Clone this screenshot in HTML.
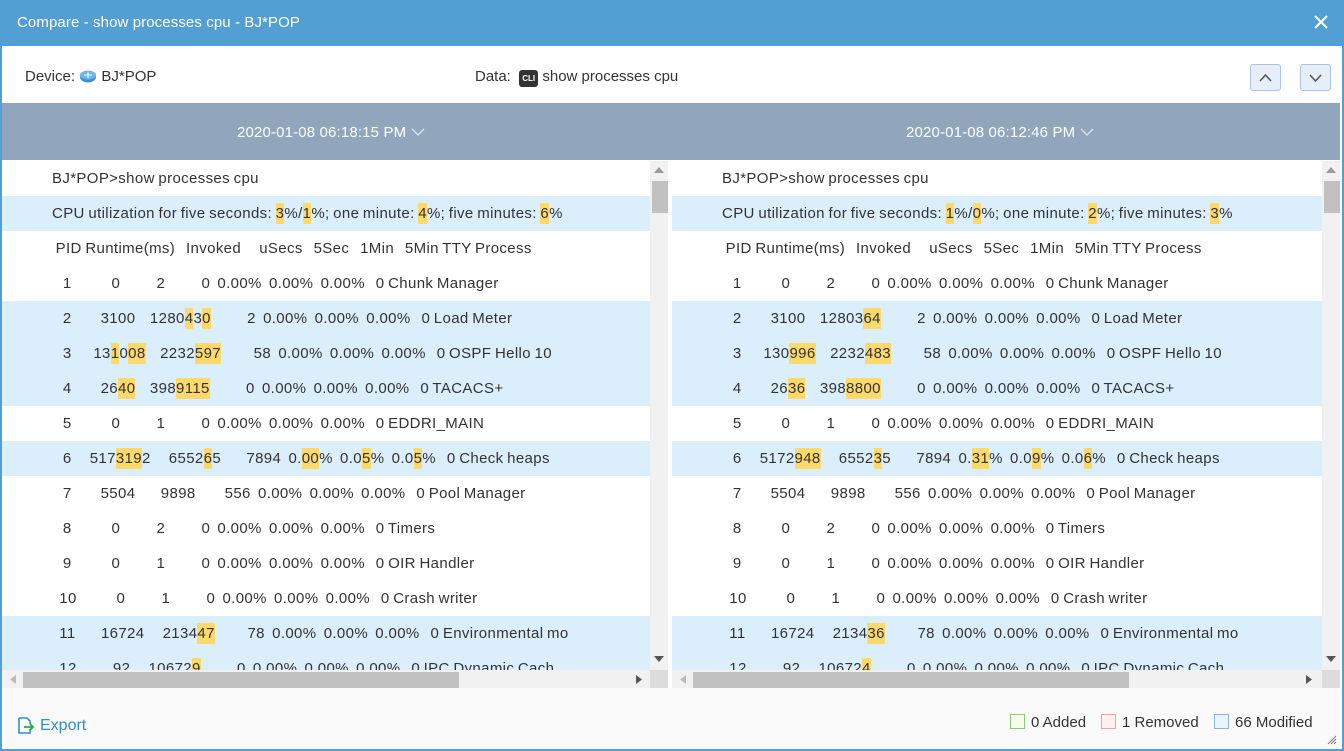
<!DOCTYPE html>
<html><head><meta charset="utf-8">
<style>
*{margin:0;padding:0;box-sizing:border-box}
body{width:1344px;height:751px;overflow:hidden;font-family:"Liberation Sans",sans-serif;color:#333;background:#fff;position:relative}
.win{position:absolute;left:0;top:0;width:1344px;height:751px;border:2px solid #519fd3;border-top:none;background:#fff}
.title{position:absolute;left:0;top:0;width:1344px;height:46px;background:#519fd3;color:#fff;font-size:15px;line-height:46px;padding-left:17px;letter-spacing:0.1px}
.close{position:absolute;right:14px;top:13px;width:18px;height:18px}
.info{position:absolute;top:67px;font-size:15px;line-height:20px}
.btn{position:absolute;top:64px;width:31px;height:27px;border:1px solid #a9c4e4;border-radius:3px;background:#e6eefa}
.gbar{position:absolute;left:2px;top:103px;width:1338px;height:57px;background:#91a6bd;color:#fff;font-size:15px;line-height:57px;letter-spacing:0.15px}
.gbar span{position:absolute;top:1px}
.pane{position:absolute;top:161px;height:509px;overflow:hidden;background:#fff}
.row{height:35px;line-height:36px;font-size:15px;white-space:pre;padding-left:50px;letter-spacing:0.36px;word-spacing:-0.9px}
.b{background:#dbeefc}
.h{background:#fdd86a;display:inline-block;line-height:21px;height:21px}
.vs{position:absolute;top:161px;width:18px;height:509px;background:#f1f1f1}
.vs .t{position:absolute;left:2px;top:20px;width:16px;height:32px;background:#c1c1c1}
.hs{position:absolute;top:670px;height:18px;background:#f1f1f1}
.hs .t{position:absolute;top:2px;height:16px;background:#c1c1c1}
.footer{position:absolute;left:2px;top:688px;width:1340px;height:61px;background:#fafafa}
.lg{position:absolute;top:714px;font-size:15px;line-height:16px}
.lg i{display:inline-block;width:15px;height:15px;vertical-align:-2px;margin-right:6px;border:1px solid}
</style></head><body>
<div class="win"></div>
<div class="title">Compare - show processes cpu - BJ*POP
<svg class="close" viewBox="0 0 18 18"><path d="M3 3L15 15M15 3L3 15" stroke="#fff" stroke-width="2"/></svg></div>

<div class="info" style="left:25px">Device: <svg width="18" height="14" viewBox="0 0 18 14" style="vertical-align:-2px"><ellipse cx="9" cy="8" rx="8" ry="5.5" fill="#3b8fd6"/><ellipse cx="9" cy="6" rx="8" ry="4.5" fill="#6bb6ef"/><path d="M5 6h8M9 3v6" stroke="#fff" stroke-width="1"/></svg> BJ*POP</div>
<div class="info" style="left:475px">Data: &nbsp;<span style="display:inline-block;width:19px;height:17px;background:#333;border-radius:3px;color:#fff;font-size:8px;line-height:17px;text-align:center;font-weight:bold;vertical-align:0">CLI</span> show processes cpu</div>
<div class="btn" style="left:1250px"><svg width="29" height="25" viewBox="0 0 29 25"><path d="M9 16l5.5-6 5.5 6" fill="none" stroke="#555" stroke-width="1.6"/></svg></div>
<div class="btn" style="left:1300px"><svg width="29" height="25" viewBox="0 0 29 25"><path d="M9 10l5.5 6 5.5-6" fill="none" stroke="#555" stroke-width="1.6"/></svg></div>

<div class="gbar"><span style="left:235px">2020-01-08 06:18:15 PM <svg width="14" height="10" viewBox="0 0 14 10"><path d="M1 2l6 6 6-6" fill="none" stroke="#dde5ee" stroke-width="1.3"/></svg></span>
<span style="left:904px">2020-01-08 06:12:46 PM <svg width="14" height="10" viewBox="0 0 14 10"><path d="M1 2l6 6 6-6" fill="none" stroke="#dde5ee" stroke-width="1.3"/></svg></span></div>

<div class="pane" style="left:2px;width:648px">
<div class="row">BJ*POP&gt;show processes cpu</div>
<div class="row b">CPU utilization for five seconds: <span class="h">3</span>%/<span class="h">1</span>%; one minute: <span class="h">4</span>%; five minutes: <span class="h">6</span>%</div>
<div class="row"> PID Runtime(ms)   Invoked     uSecs   5Sec   1Min   5Min TTY Process</div>
<div class="row">   1           0          2          0  0.00%  0.00%  0.00%   0 Chunk Manager</div>
<div class="row b">   2        3100    1280<span class="h">4</span>3<span class="h">0</span>          2  0.00%  0.00%  0.00%   0 Load Meter</div>
<div class="row b">   3      13<span class="h">1</span>0<span class="h">08</span>    2232<span class="h">597</span>         58  0.00%  0.00%  0.00%   0 OSPF Hello 10</div>
<div class="row b">   4        26<span class="h">40</span>    398<span class="h">9115</span>          0  0.00%  0.00%  0.00%   0 TACACS+</div>
<div class="row">   5           0          1          0  0.00%  0.00%  0.00%   0 EDDRI_MAIN</div>
<div class="row b">   6     517<span class="h">319</span>2     6552<span class="h">6</span>5       7894  0.<span class="h">00</span>%  0.0<span class="h">5</span>%  0.0<span class="h">5</span>%   0 Check heaps</div>
<div class="row">   7        5504       9898        556  0.00%  0.00%  0.00%   0 Pool Manager</div>
<div class="row">   8           0          2          0  0.00%  0.00%  0.00%   0 Timers</div>
<div class="row">   9           0          1          0  0.00%  0.00%  0.00%   0 OIR Handler</div>
<div class="row">  10           0          1          0  0.00%  0.00%  0.00%   0 Crash writer</div>
<div class="row b">  11       16724     2134<span class="h">47</span>         78  0.00%  0.00%  0.00%   0 Environmental mo</div>
<div class="row b">  12          92     10672<span class="h">9</span>          0  0.00%  0.00%  0.00%   0 IPC Dynamic Cach</div>
</div>

<div class="pane" style="left:672px;width:650px">
<div class="row">BJ*POP&gt;show processes cpu</div>
<div class="row b">CPU utilization for five seconds: <span class="h">1</span>%/<span class="h">0</span>%; one minute: <span class="h">2</span>%; five minutes: <span class="h">3</span>%</div>
<div class="row"> PID Runtime(ms)   Invoked     uSecs   5Sec   1Min   5Min TTY Process</div>
<div class="row">   1           0          2          0  0.00%  0.00%  0.00%   0 Chunk Manager</div>
<div class="row b">   2        3100    12803<span class="h">64</span>          2  0.00%  0.00%  0.00%   0 Load Meter</div>
<div class="row b">   3      130<span class="h">996</span>    2232<span class="h">483</span>         58  0.00%  0.00%  0.00%   0 OSPF Hello 10</div>
<div class="row b">   4        26<span class="h">36</span>    398<span class="h">8800</span>          0  0.00%  0.00%  0.00%   0 TACACS+</div>
<div class="row">   5           0          1          0  0.00%  0.00%  0.00%   0 EDDRI_MAIN</div>
<div class="row b">   6     5172<span class="h">948</span>     6552<span class="h">3</span>5       7894  0.<span class="h">31</span>%  0.0<span class="h">9</span>%  0.0<span class="h">6</span>%   0 Check heaps</div>
<div class="row">   7        5504       9898        556  0.00%  0.00%  0.00%   0 Pool Manager</div>
<div class="row">   8           0          2          0  0.00%  0.00%  0.00%   0 Timers</div>
<div class="row">   9           0          1          0  0.00%  0.00%  0.00%   0 OIR Handler</div>
<div class="row">  10           0          1          0  0.00%  0.00%  0.00%   0 Crash writer</div>
<div class="row b">  11       16724     2134<span class="h">36</span>         78  0.00%  0.00%  0.00%   0 Environmental mo</div>
<div class="row b">  12          92     10672<span class="h">4</span>          0  0.00%  0.00%  0.00%   0 IPC Dynamic Cach</div>
</div>

<div class="vs" style="left:650px"><div class="t"></div>
<svg style="position:absolute;left:4px;top:6px" width="10" height="6"><path d="M0 6L5 0L10 6Z" fill="#999"/></svg>
<svg style="position:absolute;left:4px;top:495px" width="10" height="6"><path d="M0 0L5 6L10 0Z" fill="#555"/></svg></div>
<div class="vs" style="left:1322px"><div class="t"></div>
<svg style="position:absolute;left:4px;top:6px" width="10" height="6"><path d="M0 6L5 0L10 6Z" fill="#999"/></svg>
<svg style="position:absolute;left:4px;top:495px" width="10" height="6"><path d="M0 0L5 6L10 0Z" fill="#555"/></svg></div>
<div style="position:absolute;left:668px;top:161px;width:4px;height:527px;background:#fff"></div>

<div class="hs" style="left:2px;width:648px"><div class="t" style="left:21px;width:436px"></div>
<svg style="position:absolute;left:8px;top:5px" width="6" height="9"><path d="M6 0L0 4.5L6 9Z" fill="#bbb"/></svg>
<svg style="position:absolute;left:634px;top:5px" width="6" height="9"><path d="M0 0L6 4.5L0 9Z" fill="#555"/></svg></div>
<div style="position:absolute;left:650px;top:670px;width:18px;height:18px;background:#dcdcdc"></div>
<div class="hs" style="left:672px;width:650px"><div class="t" style="left:21px;width:436px"></div>
<svg style="position:absolute;left:8px;top:5px" width="6" height="9"><path d="M6 0L0 4.5L6 9Z" fill="#bbb"/></svg>
<svg style="position:absolute;left:634px;top:5px" width="6" height="9"><path d="M0 0L6 4.5L0 9Z" fill="#555"/></svg></div>
<div style="position:absolute;left:1322px;top:670px;width:18px;height:18px;background:#dcdcdc"></div>

<div class="footer"></div>
<svg style="position:absolute;left:17px;top:717px" width="18" height="17" viewBox="0 0 18 17"><path d="M2 1h8l3 3v3M13 12v4H2V1" fill="none" stroke="#2f8fd4" stroke-width="1.6"/><path d="M7 10h9M13 7l3 3-3 3" fill="none" stroke="#2aa84a" stroke-width="1.8"/></svg>
<div style="position:absolute;left:40px;top:717px;font-size:16px;line-height:18px;color:#2f8fd4">Export</div>
<div class="lg" style="left:1010px"><i style="border-color:#8fc975;background:#f5fcef"></i>0 Added</div>
<div class="lg" style="left:1101px"><i style="border-color:#eaa3ac;background:#fdf0f1"></i>1 Removed</div>
<div class="lg" style="left:1214px"><i style="border-color:#8ab5dc;background:#eaf4fc"></i>66 Modified</div>
<svg style="position:absolute;left:1327px;top:735px" width="10" height="10"><path d="M9 1L1 9M9 4L4 9M9 7L7 9" stroke="#777" stroke-width="1"/></svg>
</body></html>
